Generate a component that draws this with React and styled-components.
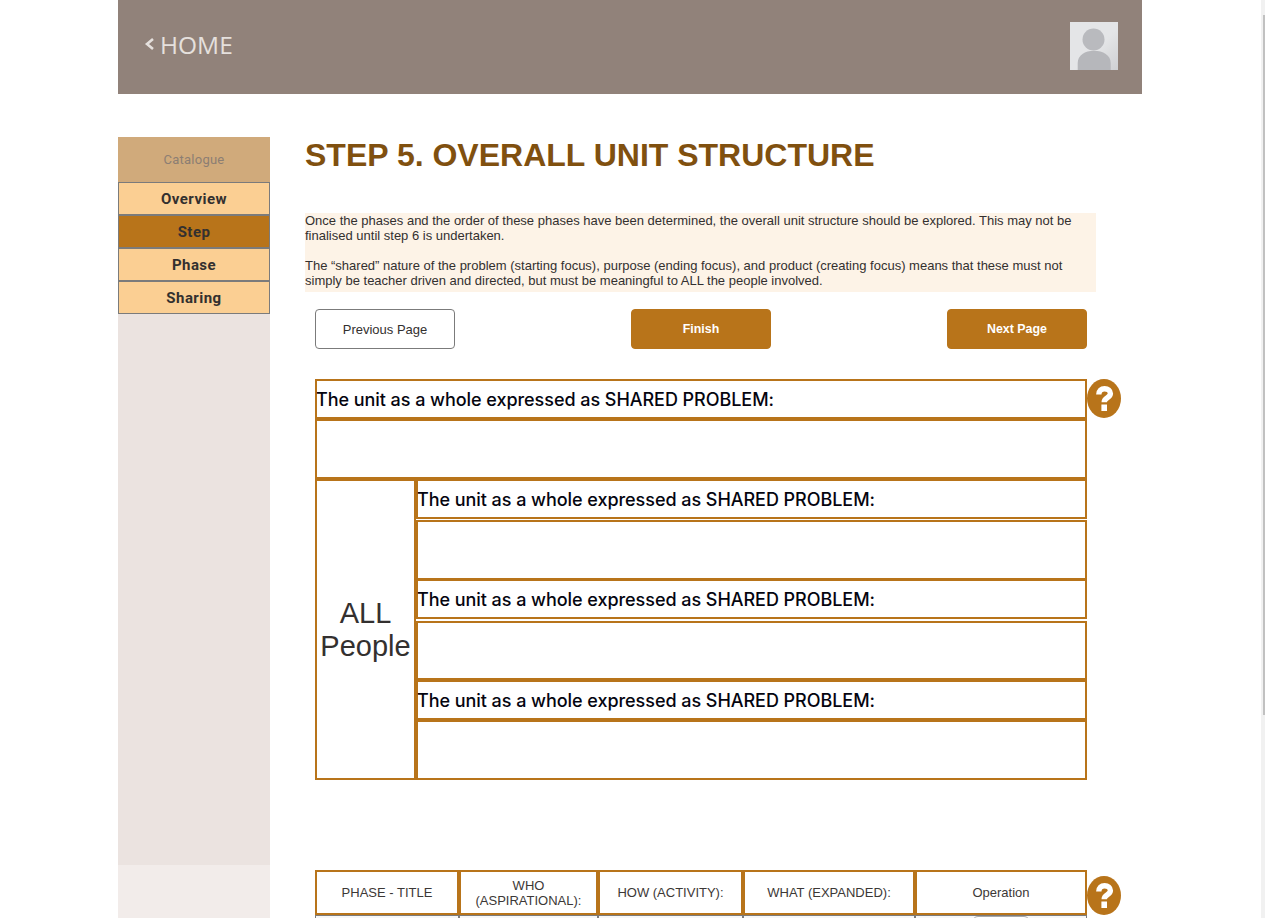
import React from "react";
import styled, { createGlobalStyle } from "styled-components";

const brown = "#b8741a";

const Global = createGlobalStyle`
  html, body { margin: 0; padding: 0; background: #fff; height: 100%; overflow: hidden; }
  * { box-sizing: border-box; }
`;
const Viewport = styled.div`
  width: 1265px; height: 918px; overflow: hidden; position: relative; font-family: "Liberation Sans", Arial, sans-serif;
`;
const Scrollbar = styled.div`
  position: absolute; top: 0; right: 0; width: 4px; height: 918px; background: #f1f1f1;
`;
const Thumb = styled.div`
  margin: 15px 0 0 2px; width: 2px; height: 700px; background: #c1c1c1;
`;
const Page = styled.div`
  width: 1024px; margin-left: 118px;
`;
const Header = styled.header`
  height: 94px; background: #91827a; display: flex; align-items: center; justify-content: space-between; padding: 0 24px 2px 26px;
`;
const Home = styled.a`
  display: flex; align-items: center; gap: 6px; color: #e5e0dd; font-family: "Open Sans", sans-serif; font-size: 24.5px; padding-bottom: 4px;
`;
const Avatar = styled.svg`
  width: 48px; height: 48px; display: block;
`;
const Blur = styled.g`
  filter: blur(0.6px);
`;
const Body = styled.div`
  display: flex; margin-top: 43px; align-items: flex-start;
`;
const Side = styled.aside`
  width: 152px; height: 781px; flex: none; background: #ebe3e0; display: flex; flex-direction: column; position: relative;
`;
const SideLower = styled.div`
  position: absolute; top: 728px; left: 0; right: 0; bottom: 0; background: #f2ecea;
`;
const SideTitle = styled.div`
  height: 45px; background: #d0aa7b; color: #8c7e73; font: 13px Roboto, sans-serif; letter-spacing: 0.25px; display: flex; align-items: center; justify-content: center;
`;
const SideItem = styled.div`
  height: 33px; border: 1px solid #7b7b7b;
  background: ${p => (p.$active ? "#b8741a" : "#fbcf93")}; color: #33302f; font: bold 15px Roboto, sans-serif; letter-spacing: 0.45px;
  display: flex; align-items: center; justify-content: center;
`;
const Main = styled.main`
  margin-left: 35px; width: 791px;
`;
const Title = styled.h1`
  margin: 0; color: #80500f; font: bold 32px/36px "Liberation Sans", sans-serif;
`;
const Intro = styled.div`
  margin-top: 40px; background: #fdf3e7; color: #33302f; font-size: 13px; line-height: 15px; height: 79px;
`;
const IntroP = styled.p`
  margin: 0 0 15px; padding-right: 20px;
  &:last-child { margin: 0; }
`;
const Buttons = styled.div`
  display: flex; justify-content: space-between; margin: 17px 9px 0 10px;
`;
const Btn = styled.button`
  width: 140px; height: 40px; border-radius: 4px; font: ${p => (p.$solid ? "bold 12.4px" : "normal 13px")} "Liberation Sans", sans-serif;
  border: 1px solid ${p => (p.$solid ? brown : "#7b7b7b")}; background: ${p => (p.$solid ? brown : "#fff")}; color: ${p => (p.$solid ? "#fff" : "#33302f")};
`;
const Row = styled.div`
  display: flex; margin: 30px 0 0 10px; align-items: flex-start;
`;
const Frame = styled.div`
  width: 772px; flex: none;
`;
const Help = styled.svg`
  width: 34px; height: 39px; flex: none; margin-top: ${p => p.$top || 0}px;
`;
const Label = styled.div`
  height: ${p => p.$h}px; border: solid ${brown}; border-width: ${p => p.$b || "2px"}; display: flex; align-items: center; padding-top: 2px;
  color: #05050f; font: 500 18px/1 Inter, sans-serif; letter-spacing: -0.05px; text-indent: -1px;
`;
const Blank = styled.div`
  height: ${p => p.$h}px; margin-top: ${p => p.$gap || 0}px; border: 2px solid ${brown};
`;
const Split = styled.div`
  display: flex; height: 301px;
`;
const AllPeople = styled.div`
  width: 101px; flex: none; border: 2px solid ${brown}; display: flex; align-items: center; justify-content: center; text-align: center;
  color: #33302f; font: 29px/33px "Liberation Sans", sans-serif;
`;
const Stack = styled.div`
  flex: 1; min-width: 0; display: flex; flex-direction: column;
`;
const TableRow = styled.div`
  display: flex; margin: 90px 0 0 10px; align-items: flex-start;
`;
const Col = styled.div`display: flex; flex-direction: column;`;
const Table = styled.div`
  width: 772px; flex: none; height: 45px; display: grid; grid-template-columns: 144px 139px 145px 172px 172px;
`;
const Head = styled.div`
  border: 2px solid ${brown}; display: flex; align-items: center; justify-content: center; text-align: center; color: #3c3836; font-size: 13px; line-height: 15px; padding: 0 12px;
`;
const Sub = styled.div`
  width: 772px; height: 4px; display: grid; grid-template-columns: 144px 139px 145px 172px 172px;
`;
const SubCell = styled.div`
  border: solid #7b7b7b; border-width: 1px 1px 0 1px; background: #f7f7f7; display: flex; justify-content: center;
`;
const Pill = styled.div`
  width: 58px; height: 12px; border: 1px solid #a8a8a8; border-radius: 6px; background: #fff;
`;

const HelpIcon = ({ top }) => (
  <Help $top={top} viewBox="0 0 34 39">
    <ellipse cx="17" cy="19.5" rx="17" ry="19.5" fill={brown} />
    <path d="M11.8 15.5C11.8 11.6 14.2 9.7 17.6 9.7c3.4 0 5.8 1.9 5.8 4.9 0 4.4-6.2 4-6.2 8.6" fill="none" stroke="#fff" strokeWidth="5.4" />
    <rect x="14.4" y="25.5" width="5.6" height="6.5" fill="#fff" />
  </Help>
);

const AvatarArt = () => (
  <Avatar viewBox="0 0 48 48">
    <defs>
      <linearGradient id="g" x1="0" y1="0" x2="1" y2="1">
        <stop offset="0.55" stopColor="#e4e5e7" />
        <stop offset="1" stopColor="#cfd0d3" />
      </linearGradient>
    </defs>
    <rect width="48" height="48" fill="url(#g)" />
    <Blur>
      <circle cx="23.5" cy="17.5" r="11" fill="#b9babe" />
      <path d="M7.7 50V41C7.7 33 15 28.7 24 28.7S40.7 33 40.7 41v9z" fill="#b6b7bb" />
    </Blur>
  </Avatar>
);

const L = "The unit as a whole expressed as SHARED PROBLEM:";

export default function App() {
  return (
    <Viewport>
      <Global />
      <Page>
        <Header>
          <Home>
            <svg width="10" height="14" viewBox="0 0 10 14"><path d="M9 2 3 7l6 5" fill="none" stroke="#e5e0dd" strokeWidth="2.6" /></svg>
            HOME
          </Home>
          <AvatarArt />
        </Header>
        <Body>
          <Side>
            <SideTitle>Catalogue</SideTitle>
            <SideItem>Overview</SideItem>
            <SideItem $active>Step</SideItem>
            <SideItem>Phase</SideItem>
            <SideItem>Sharing</SideItem>
            <SideLower />
          </Side>
          <Main>
            <Title>STEP 5. OVERALL UNIT STRUCTURE</Title>
            <Intro>
              <IntroP>Once the phases and the order of these phases have been determined, the overall unit structure should be explored. This may not be finalised until step 6 is undertaken.</IntroP>
              <IntroP>The “shared” nature of the problem (starting focus), purpose (ending focus), and product (creating focus) means that these must not simply be teacher driven and directed, but must be meaningful to ALL the people involved.</IntroP>
            </Intro>
            <Buttons>
              <Btn>Previous Page</Btn>
              <Btn $solid>Finish</Btn>
              <Btn $solid>Next Page</Btn>
            </Buttons>
            <Row>
              <Frame>
                <Label $h={40}>{L}</Label>
                <Blank $h={60} />
                <Split>
                  <AllPeople>ALL<br />People</AllPeople>
                  <Stack>
                    <Label $h={40}>{L}</Label>
                    <Blank $h={60} $gap={1} />
                    <Label $h={39} $b="1px 2px 2px 2px">{L}</Label>
                    <Blank $h={59} $gap={2} />
                    <Label $h={40}>{L}</Label>
                    <Blank $h={60} />
                  </Stack>
                </Split>
              </Frame>
              <HelpIcon />
            </Row>
            <TableRow>
              <Col>
                <Table>
                  <Head>PHASE - TITLE</Head>
                  <Head>WHO (ASPIRATIONAL):</Head>
                  <Head>HOW (ACTIVITY):</Head>
                  <Head>WHAT (EXPANDED):</Head>
                  <Head>Operation</Head>
                </Table>
                <Sub><SubCell /><SubCell /><SubCell /><SubCell /><SubCell><Pill /></SubCell></Sub>
              </Col>
              <HelpIcon top={6} />
            </TableRow>
          </Main>
        </Body>
      </Page>
      <Scrollbar><Thumb /></Scrollbar>
    </Viewport>
  );
}
